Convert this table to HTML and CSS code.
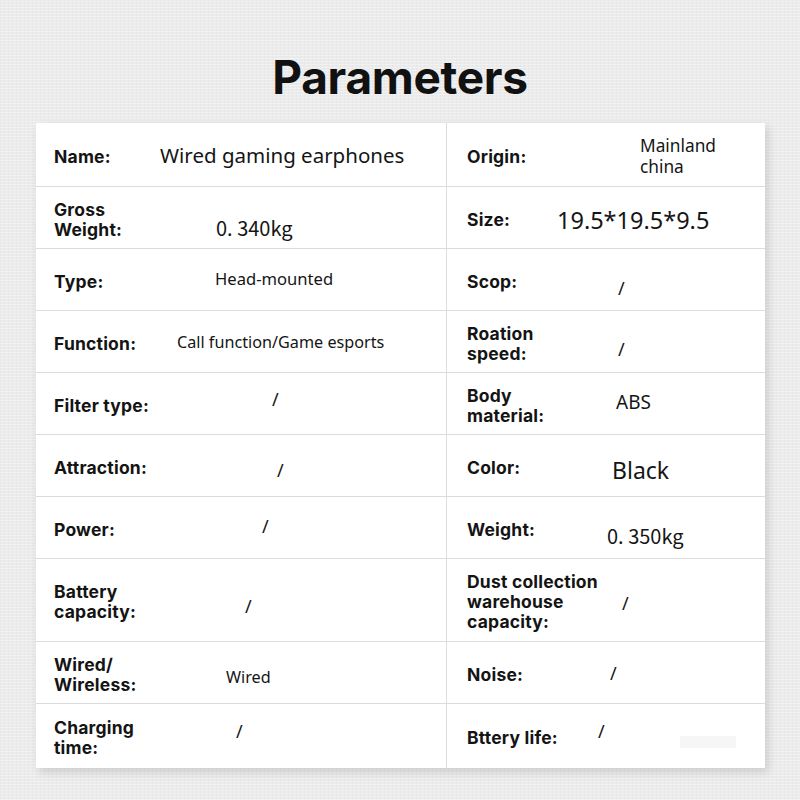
FILE: index.html
```html
<!DOCTYPE html>
<html lang="en">
<head>
<meta charset="utf-8">
<title>Parameters</title>
<link rel="stylesheet" href="styles.css">
</head>
<body>
<main class="page">
  <h1 class="title">Parameters</h1>
  <section class="table">
    <div class="cell left"><span class="label">Name:</span><span class="val v-name">Wired gaming earphones</span></div>
    <div class="cell right"><span class="label">Origin:</span><span class="val v-origin">Mainland<br>china</span></div>

    <div class="cell left"><span class="label">Gross<br>Weight:</span><span class="val v-gross">0. 340kg</span></div>
    <div class="cell right"><span class="label">Size:</span><span class="val v-size">19.5*19.5*9.5</span></div>

    <div class="cell left"><span class="label">Type:</span><span class="val v-type">Head-mounted</span></div>
    <div class="cell right"><span class="label">Scop:</span><span class="val slash v-scop">/</span></div>

    <div class="cell left"><span class="label">Function:</span><span class="val v-func">Call function/Game esports</span></div>
    <div class="cell right"><span class="label">Roation<br>speed:</span><span class="val slash v-roation">/</span></div>

    <div class="cell left"><span class="label">Filter type:</span><span class="val slash v-filter">/</span></div>
    <div class="cell right"><span class="label">Body<br>material:</span><span class="val v-abs">ABS</span></div>

    <div class="cell left"><span class="label">Attraction:</span><span class="val slash v-attr">/</span></div>
    <div class="cell right"><span class="label">Color:</span><span class="val v-color">Black</span></div>

    <div class="cell left"><span class="label">Power:</span><span class="val slash v-power">/</span></div>
    <div class="cell right"><span class="label">Weight:</span><span class="val v-weight">0. 350kg</span></div>

    <div class="cell left"><span class="label">Battery<br>capacity:</span><span class="val slash v-battery">/</span></div>
    <div class="cell right"><span class="label">Dust collection<br>warehouse<br>capacity:</span><span class="val slash v-dust">/</span></div>

    <div class="cell left"><span class="label">Wired/<br>Wireless:</span><span class="val v-wired">Wired</span></div>
    <div class="cell right"><span class="label">Noise:</span><span class="val slash v-noise">/</span></div>

    <div class="cell left last"><span class="label">Charging<br>time:</span><span class="val slash v-charge">/</span></div>
    <div class="cell right last"><span class="label">Bttery life:</span><span class="val slash v-life">/</span><span class="smudge"></span></div>
  </section>
</main>
</body>
</html>
```

FILE: styles.css
```css
* { box-sizing: border-box; }

html, body {
  margin: 0;
  padding: 0;
}

body {
  width: 800px;
  height: 800px;
  overflow: hidden;
  background-color: #ebebeb;
  background-image:
    repeating-linear-gradient(0deg, rgba(255,255,255,0.35) 0 1px, rgba(0,0,0,0) 1px 3px),
    repeating-linear-gradient(90deg, rgba(0,0,0,0.015) 0 1px, rgba(0,0,0,0) 1px 4px);
  font-family: Inter, "Liberation Sans", sans-serif;
  color: #111;
}

.page {
  padding-top: 50px;
}

.title {
  margin: 0 0 19px 0;
  height: 54px;
  line-height: 54px;
  text-align: center;
  font-family: Inter, "Liberation Sans", sans-serif;
  font-weight: 700;
  font-size: 46px;
  letter-spacing: -0.3px;
  color: #111;
}

.table {
  margin-left: 36px;
  width: 729px;
  background: #fff;
  display: grid;
  grid-template-columns: 411px 318px;
  grid-template-rows: 64px 62px 62px 62px 62px 62px 62px 83px 62px 64px;
  box-shadow: 3px 4px 9px rgba(0,0,0,0.14);
}

.cell {
  display: grid;
  grid-template-columns: 1fr;
  grid-template-rows: 1fr;
  align-items: center;
  border-bottom: 1px solid #dcdcdc;
}

.cell.last { border-bottom: none; }

.cell.left { border-right: 1px solid #dcdcdc; }

.label, .val, .smudge {
  grid-column: 1;
  grid-row: 1;
  justify-self: start;
}

.label {
  font-family: Inter, "Liberation Sans", sans-serif;
  font-weight: 700;
  font-size: 17.5px;
  letter-spacing: 0.2px;
  line-height: 20px;
  color: #141414;
  margin-top: 4px;
}

.left .label { margin-left: 18px; }
.right .label { margin-left: 20px; }

.val {
  font-family: "Noto Sans", "Open Sans", sans-serif;
  font-weight: 400;
  color: #151515;
  white-space: nowrap;
}

.slash {
  font-size: 18px;
  line-height: 22px;
}

/* left column values */
.v-name  { margin-left: 124px; font-size: 20.5px; line-height: 26px; }
.v-gross { margin-left: 180px; font-size: 20px; line-height: 24px; margin-top: 20px; font-family: "Noto Sans CJK SC", "Noto Sans", sans-serif; }
.v-type  { margin-left: 179px; font-size: 16.6px; line-height: 22px; margin-bottom: 2px; }
.v-func  { margin-left: 141px; font-size: 16.2px; line-height: 22px; }
.v-filter { margin-left: 236px; margin-bottom: 10px; }
.v-attr  { margin-left: 241px; margin-top: 8px; }
.v-power { margin-left: 226px; margin-bottom: 4px; }
.v-battery { margin-left: 209px; margin-top: 12px; }
.v-wired { margin-left: 190px; font-size: 16.2px; line-height: 22px; margin-top: 8px; }
.v-charge { margin-left: 200px; margin-bottom: 10px; }

/* right column values */
.v-origin { margin-left: 193px; font-size: 17.3px; line-height: 21px; margin-top: 2px; }
.v-size  { margin-left: 110px; font-size: 23.5px; line-height: 28px; margin-top: 4px; }
.v-scop  { margin-left: 171px; margin-top: 16px; }
.v-roation { margin-left: 171px; margin-top: 14px; }
.v-abs   { margin-left: 169px; font-size: 19px; line-height: 24px; margin-bottom: 4px; }
.v-color { margin-left: 165px; font-size: 23px; line-height: 30px; margin-top: 8px; }
.v-weight { margin-left: 160px; font-size: 20px; line-height: 24px; margin-top: 16px; font-family: "Noto Sans CJK SC", "Noto Sans", sans-serif; }
.v-dust  { margin-left: 175px; margin-top: 6px; }
.v-noise { margin-left: 163px; }
.v-life  { margin-left: 151px; margin-bottom: 10px; }

.smudge {
  margin-left: 233px;
  margin-top: 12px;
  width: 56px;
  height: 12px;
  background: #f6f6f6;
}
```
